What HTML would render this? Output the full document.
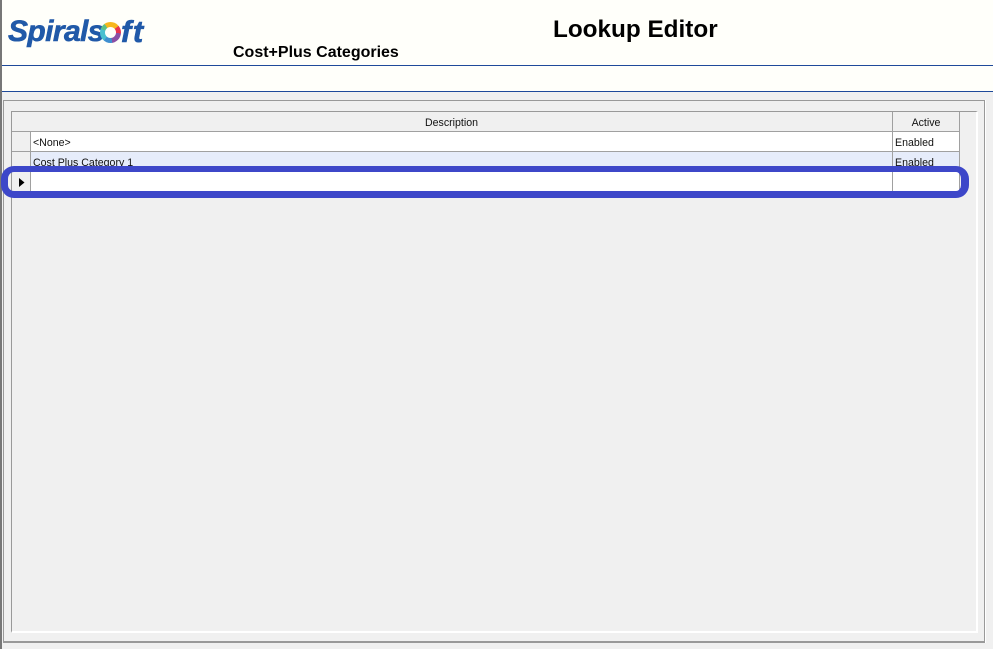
<!DOCTYPE html>
<html><head><meta charset="utf-8"><style>
html,body{margin:0;padding:0}
body{width:993px;height:649px;position:relative;overflow:hidden;background:#f0f0f0;font-family:"Liberation Sans",sans-serif;color:#000}
.a{position:absolute}
.t{position:absolute;font-size:10.6px;line-height:12px;white-space:nowrap;color:#111}
.l{position:absolute;font:italic bold 31px/36px "Liberation Sans",sans-serif;color:#2059a8;white-space:nowrap;-webkit-text-stroke:0.6px #2059a8}
</style></head><body>
<div class="a" style="left:0;top:0;width:993px;height:92px;background:#fffffa"></div>
<div class="a" style="left:0;top:65px;width:993px;height:1px;background:#1f4a9a"></div>
<div class="a" style="left:0;top:91px;width:993px;height:1px;background:#1f4a9a"></div>
<div class="a" style="left:0;top:0;width:2px;height:649px;background:#777"></div>

<div class="l" style="left:8px;top:14px;font-size:30px;letter-spacing:-0.6px">Spirals</div>
<div class="a" style="left:100px;top:22px;width:21px;height:21px;border-radius:50%;background:conic-gradient(#f7b71d 0 50deg,#e8344f 50deg 95deg,#8a4fa5 95deg 170deg,#3f8fd0 170deg 220deg,#49c0d0 220deg 290deg,#5cc08a 290deg 325deg,#f7b71d 325deg 360deg)"></div>
<div class="a" style="left:105px;top:27px;width:11px;height:11px;border-radius:50%;background:#fffffa"></div>
<div class="l" style="left:121px;top:14px;letter-spacing:1.5px">ft</div>

<div class="a" style="left:233px;top:43px;font:bold 16px/19px 'Liberation Sans',sans-serif;white-space:nowrap">Cost+Plus Categories</div>
<div class="a" style="left:553px;top:16px;font:bold 24.3px/28px 'Liberation Sans',sans-serif;white-space:nowrap">Lookup Editor</div>

<!-- panel -->
<div class="a" style="left:3px;top:100px;width:982px;height:543px;box-sizing:border-box;border:1px solid #999;border-bottom-width:2px;box-shadow:1px 0 0 #fff"></div>

<!-- grid -->
<div class="a" style="left:11px;top:111px;box-sizing:border-box;width:967px;height:522px;background:#f0f0f0;border-left:1px solid #999;border-top:1px solid #999;border-right:2px solid #fff;border-bottom:2px solid #fff"></div>
<div class="a" style="left:31px;top:132px;width:861px;height:19px;background:#fff"></div>
<div class="a" style="left:893px;top:132px;width:66px;height:19px;background:#fff"></div>
<div class="a" style="left:31px;top:152px;width:861px;height:19px;background:#e6ecfa"></div>
<div class="a" style="left:893px;top:152px;width:66px;height:19px;background:#e6ecfa"></div>
<div class="a" style="left:31px;top:172px;width:861px;height:19px;background:#fff"></div>
<div class="a" style="left:893px;top:172px;width:66px;height:19px;background:#fff"></div>
<!-- lines -->
<div class="a" style="left:12px;top:131px;width:948px;height:1px;background:#a0a0a0"></div>
<div class="a" style="left:12px;top:151px;width:948px;height:1px;background:#a0a0a0"></div>
<div class="a" style="left:12px;top:171px;width:948px;height:1px;background:#a0a0a0"></div>
<div class="a" style="left:12px;top:191px;width:948px;height:1px;background:#a0a0a0"></div>
<div class="a" style="left:30px;top:132px;width:1px;height:60px;background:#a0a0a0"></div>
<div class="a" style="left:892px;top:112px;width:1px;height:80px;background:#a0a0a0"></div>
<div class="a" style="left:959px;top:112px;width:1px;height:80px;background:#a0a0a0"></div>

<div class="t" style="left:11px;width:881px;top:117px;text-align:center">Description</div>
<div class="t" style="left:893px;width:66px;top:117px;text-align:center">Active</div>
<div class="t" style="left:33px;top:137px">&lt;None&gt;</div>
<div class="t" style="left:895px;top:137px">Enabled</div>
<div class="t" style="left:33px;top:157px">Cost Plus Category 1</div>
<div class="t" style="left:895px;top:157px">Enabled</div>

<svg class="a" style="left:19px;top:178px" width="6" height="10"><path d="M0 0L5.5 4.5L0 9Z" fill="#000"/></svg>

<!-- highlight -->
<div class="a" style="left:1px;top:166px;width:968px;height:32px;box-sizing:border-box;border-style:solid;border-color:#3d47c9;border-width:6px 8px 7px 7px;border-radius:13px"></div>
</body></html>
